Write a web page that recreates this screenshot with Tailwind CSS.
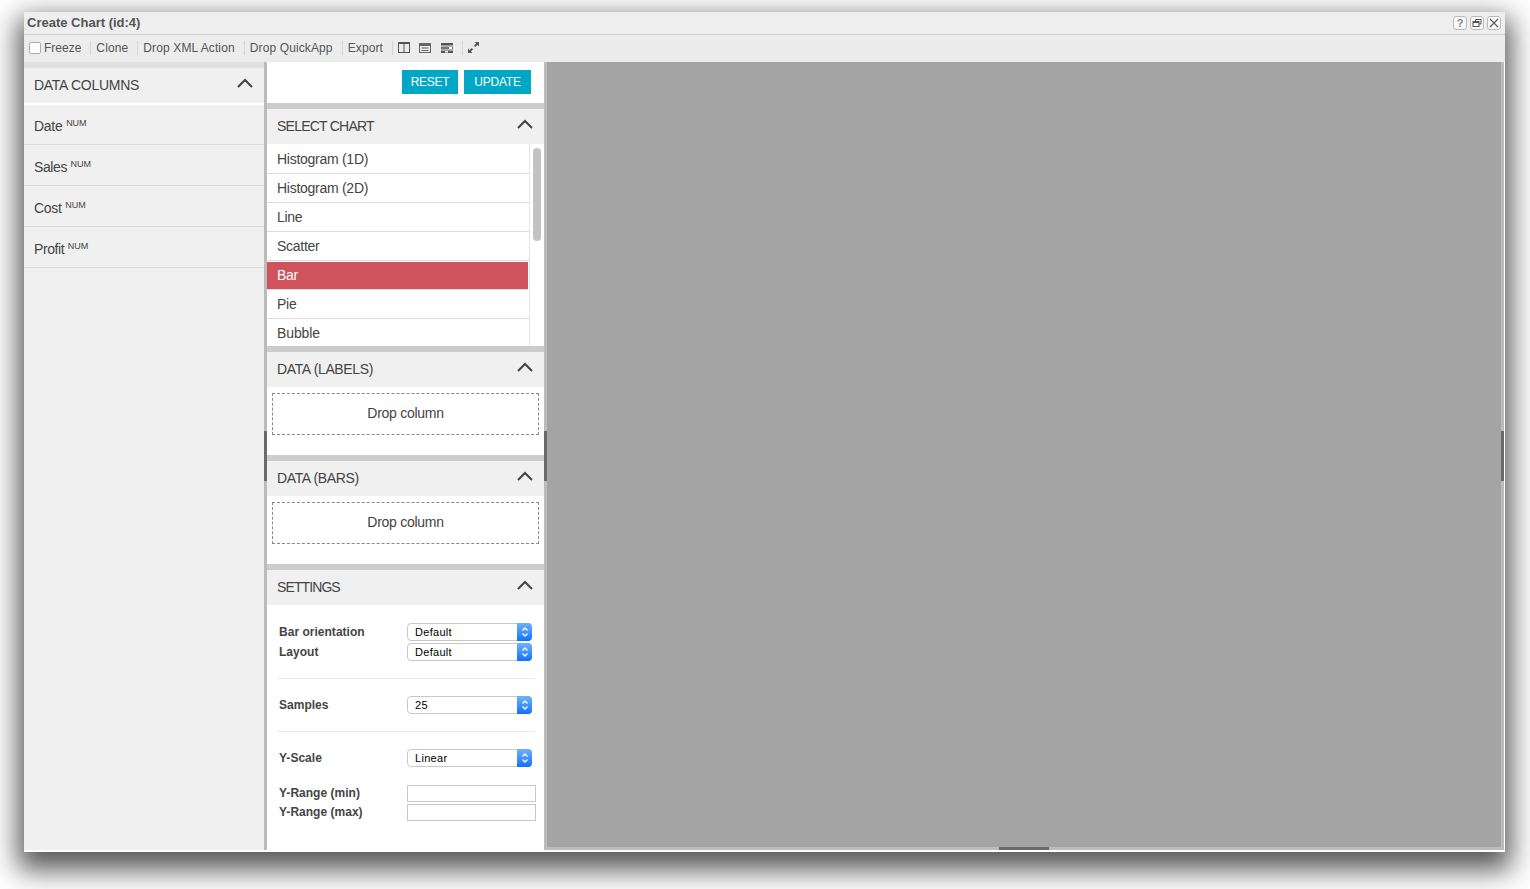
<!DOCTYPE html>
<html><head><meta charset="utf-8">
<script src="https://cdn.jsdelivr.net/npm/@tailwindcss/browser@4"></script>
</head>
<body class="bg-white overflow-hidden h-[889px] font-['Liberation_Sans',Arial,sans-serif] text-[#444]">
<div class="ml-[24px] mt-[12px] w-[1481px] h-[840px] flex flex-col bg-white shadow-[0_12px_26px_6px_rgba(0,0,0,0.66)]">
  <!-- title bar -->
  <div class="h-[23px] bg-[#eeeeee] border-b border-[#cfcfcf] flex items-center justify-between pl-[3px] pr-[4px] shrink-0">
    <span class="text-[13px] font-bold text-[#555]">Create Chart (id:4)</span>
    <div class="flex gap-[3px]">
      <div class="w-[14px] h-[14px] rounded-[3px] border border-[#bbb] bg-[#f8f8f8] flex items-center justify-center text-[11px] font-bold text-[#888] leading-none">?</div>
      <div class="w-[14px] h-[14px] rounded-[3px] border border-[#bbb] bg-[#f8f8f8] flex items-center justify-center">
        <svg width="10" height="10" viewBox="0 0 10 10" fill="none" stroke="#555" stroke-width="1"><path d="M3.5 3V1.5H9V6H7"/><rect x="1" y="3.5" width="6" height="5"/><path d="M1 4.5H7" /></svg>
      </div>
      <div class="w-[14px] h-[14px] rounded-[3px] border border-[#bbb] bg-[#f8f8f8] flex items-center justify-center">
        <svg width="10" height="10" viewBox="0 0 10 10" fill="none" stroke="#555" stroke-width="1.1"><path d="M1 1L9 9M9 1L1 9"/></svg>
      </div>
    </div>
  </div>
  <!-- toolbar -->
  <div class="h-[27px] bg-[#ececec] flex items-center pl-[5px] pb-[2px] text-[12px] text-[#555] tracking-[0.12px] shrink-0">
    <span class="w-[12px] h-[12px] rounded-[2px] border border-[#aaa] bg-white mr-[3px]"></span>
    <span class="tracking-[0px]">Freeze</span>
    <span class="w-px h-[14px] bg-[#d4d4d4] ml-[9px] mr-[5px]"></span>
    <span>Clone</span>
    <span class="w-px h-[14px] bg-[#d4d4d4] ml-[9px] mr-[5px]"></span>
    <span>Drop XML Action</span>
    <span class="w-px h-[14px] bg-[#d4d4d4] ml-[9px] mr-[5px]"></span>
    <span>Drop QuickApp</span>
    <span class="w-px h-[14px] bg-[#d4d4d4] ml-[9px] mr-[5px]"></span>
    <span>Export</span>
    <span class="w-px h-[14px] bg-[#d4d4d4] ml-[9px] mr-[5px]"></span>
    <svg width="12" height="11" viewBox="0 0 12 11" fill="none" stroke="#555" class="mr-[9px]"><rect x="0.5" y="0.5" width="11" height="10"/><path d="M6 0.5V10.5M0.5 1.5H11.5"/></svg>
    <svg width="12" height="10" viewBox="0 0 12 10" fill="none" stroke="#666" class="mr-[10px]"><rect x="0.5" y="0.5" width="11" height="9"/><path d="M0.5 2H11.5" stroke-width="2"/><path d="M2.5 5H9.5M2.5 7.5H9.5" /></svg>
    <svg width="12" height="10" viewBox="0 0 12 10" class="mr-[9px]"><rect width="12" height="2.5" fill="#555"/><rect y="3.5" width="12" height="3" fill="#777"/><rect x="8" y="4" width="3" height="2" fill="#fff"/><rect y="7.5" width="12" height="2.5" fill="#555"/><rect x="4" y="8" width="3" height="1.5" fill="#fff"/></svg>
    <span class="w-px h-[14px] bg-[#d4d4d4] mr-[5px]"></span>
    <svg width="11" height="11" viewBox="0 0 11 11" fill="#555"><path d="M6.5 0H11V4.5L9.4 2.9L7.2 5L6 3.8L8.1 1.6Z"/><path d="M4.5 11H0V6.5L1.6 8.1L3.8 6L5 7.2L2.9 9.4Z"/></svg>
  </div>
  <!-- body -->
  <div class="flex-1 min-h-0 flex bg-white">
    <!-- left -->
    <div class="w-[240px] shrink-0 bg-[#f0f0f0] flex flex-col tracking-[-0.27px]">
      <div class="h-[6px] bg-[#e0e0e0]"></div>
      <div class="h-[35px] flex items-center justify-between pl-[10px] pr-[11px] text-[14px] text-[#444]">
        <span>DATA COLUMNS</span>
        <svg width="16" height="10" viewBox="0 0 16 10" fill="none" stroke="#444" stroke-width="2" class="mb-[5px]"><path d="M1 9L8 2L15 9"/></svg>
      </div>
      <div class="h-[2px] bg-white"></div>
      <div class="h-[40px] pl-[10px] border-b border-[#dcdcdc] text-[14px] flex items-center pt-[3px]"><span>Date <sup class="text-[9px] -top-[5px] relative align-baseline tracking-[0px]">NUM</sup></span></div>
      <div class="h-[41px] pl-[10px] border-b border-[#dcdcdc] text-[14px] flex items-center pt-[5px]"><span class="tracking-[-0.4px]">Sales <sup class="text-[9px] -top-[5px] relative align-baseline tracking-[0px]">NUM</sup></span></div>
      <div class="h-[41px] pl-[10px] border-b border-[#dcdcdc] text-[14px] flex items-center pt-[5px]"><span>Cost <sup class="text-[9px] -top-[5px] relative align-baseline tracking-[0px]">NUM</sup></span></div>
      <div class="h-[41px] pl-[10px] border-b border-[#dcdcdc] text-[14px] flex items-center pt-[5px]"><span class="tracking-[-0.4px]">Profit <sup class="text-[9px] -top-[5px] relative align-baseline tracking-[0px]">NUM</sup></span></div>
    </div>
    <!-- splitter -->
    <div class="w-[3px] shrink-0 bg-[#bbbbbb] relative"><div class="absolute left-0 top-[369px] w-[3px] h-[50px] bg-[#6a6a6a]"></div></div>
    <!-- middle -->
    <div class="w-[277px] shrink-0 bg-white flex flex-col text-[14px] tracking-[-0.27px] overflow-hidden">
      <div class="h-[41px] shrink-0 flex justify-end gap-[6px] pr-[13px] pt-[8px]">
        <div class="w-[56px] h-[24px] bg-[#00a8c6] text-white text-[12px] tracking-[-0.3px] flex items-center justify-center">RESET</div>
        <div class="w-[67px] h-[24px] bg-[#00a8c6] text-white text-[12px] tracking-[-0.2px] flex items-center justify-center">UPDATE</div>
      </div>
      <div class="h-[6px] shrink-0 bg-[#cccccc]"></div>
      <div class="h-[35px] shrink-0 bg-[#f0f0f0] flex items-center justify-between pl-[10px] pr-[11px]">
        <span class="tracking-[-0.77px]">SELECT CHART</span>
        <svg width="16" height="10" viewBox="0 0 16 10" fill="none" stroke="#444" stroke-width="2" class="mb-[5px]"><path d="M1 9L8 2L15 9"/></svg>
      </div>
      <div class="h-[202px] shrink-0 flex overflow-hidden">
        <div class="w-[263px] border-r border-[#e4e4e4] shrink-0">
          <div class="h-[30px] pl-[10px] pt-[1px] flex items-center border-b border-[#dcdcdc]">Histogram (1D)</div>
          <div class="h-[29px] pl-[10px] flex items-center border-b border-[#dcdcdc]">Histogram (2D)</div>
          <div class="h-[29px] pl-[10px] flex items-center border-b border-[#dcdcdc]">Line</div>
          <div class="h-[29px] pl-[10px] flex items-center border-b border-[#dcdcdc]">Scatter</div>
          <div class="h-[29px] w-[261px] pl-[10px] flex items-center bg-[#cf535d] bg-clip-padding text-white border-t border-b border-t-white border-b-[#dcdcdc]">Bar</div>
          <div class="h-[29px] pl-[10px] flex items-center border-b border-[#dcdcdc]">Pie</div>
          <div class="h-[29px] pl-[10px] flex items-center tracking-[-0.1px]">Bubble</div>
        </div>
        <div class="flex-1 pt-[4px] pl-[3px]"><div class="w-[8px] h-[93px] rounded-[4px] bg-[#c2c2c2]"></div></div>
      </div>
      <div class="h-[6px] shrink-0 bg-[#cccccc]"></div>
      <div class="h-[35px] shrink-0 bg-[#f0f0f0] flex items-center justify-between pl-[10px] pr-[11px]">
        <span class="tracking-[-0.35px]">DATA (LABELS)</span>
        <svg width="16" height="10" viewBox="0 0 16 10" fill="none" stroke="#444" stroke-width="2" class="mb-[5px]"><path d="M1 9L8 2L15 9"/></svg>
      </div>
      <div class="h-[68px] shrink-0 pt-[6px] px-[5px]">
        <div class="h-[42px] pb-[2px] border border-dashed border-[#888] flex items-center justify-center">Drop column</div>
      </div>
      <div class="h-[6px] shrink-0 bg-[#cccccc]"></div>
      <div class="h-[35px] shrink-0 bg-[#f0f0f0] flex items-center justify-between pl-[10px] pr-[11px]">
        <span class="tracking-[-0.37px]">DATA (BARS)</span>
        <svg width="16" height="10" viewBox="0 0 16 10" fill="none" stroke="#444" stroke-width="2" class="mb-[5px]"><path d="M1 9L8 2L15 9"/></svg>
      </div>
      <div class="h-[68px] shrink-0 pt-[6px] px-[5px]">
        <div class="h-[42px] pb-[2px] border border-dashed border-[#888] flex items-center justify-center">Drop column</div>
      </div>
      <div class="h-[6px] shrink-0 bg-[#cccccc]"></div>
      <div class="h-[35px] shrink-0 bg-[#f0f0f0] flex items-center justify-between pl-[10px] pr-[11px]">
        <span class="tracking-[-0.9px]">SETTINGS</span>
        <svg width="16" height="10" viewBox="0 0 16 10" fill="none" stroke="#444" stroke-width="2" class="mb-[5px]"><path d="M1 9L8 2L15 9"/></svg>
      </div>
      <!-- settings -->
      <div class="pl-[12px] pr-[8px] pt-[18px] text-[12px] font-bold text-[#444] tracking-[0.02px]">
        <div class="flex items-center h-[18px] mb-[2px]"><span class="w-[128px]">Bar orientation</span>
          <div class="w-[125px] h-[18px] rounded-[4px] border border-[#c8c8c8] bg-white flex items-center justify-between font-normal text-[11px] tracking-[0.3px] text-black pl-[7px]">Default<div class="w-[15px] h-[18px] -mr-px rounded-r-[4px] bg-gradient-to-b from-[#6cb3fa] to-[#0d6ffb] flex items-center justify-center"><svg width="8" height="12" viewBox="0 0 8 12" fill="none" stroke="#fff" stroke-width="1.3"><path d="M1.5 4.5L4 2L6.5 4.5M1.5 7.5L4 10L6.5 7.5"/></svg></div></div></div>
        <div class="flex items-center h-[18px]"><span class="w-[128px]">Layout</span>
          <div class="w-[125px] h-[18px] rounded-[4px] border border-[#c8c8c8] bg-white flex items-center justify-between font-normal text-[11px] tracking-[0.3px] text-black pl-[7px]">Default<div class="w-[15px] h-[18px] -mr-px rounded-r-[4px] bg-gradient-to-b from-[#6cb3fa] to-[#0d6ffb] flex items-center justify-center"><svg width="8" height="12" viewBox="0 0 8 12" fill="none" stroke="#fff" stroke-width="1.3"><path d="M1.5 4.5L4 2L6.5 4.5M1.5 7.5L4 10L6.5 7.5"/></svg></div></div></div>
        <div class="h-px bg-[#eaeaea] mt-[17px] -ml-[2px] mr-[1px] mb-[17px]"></div>
        <div class="flex items-center h-[18px]"><span class="w-[128px]">Samples</span>
          <div class="w-[125px] h-[18px] rounded-[4px] border border-[#c8c8c8] bg-white flex items-center justify-between font-normal text-[11px] tracking-[0.3px] text-black pl-[7px]">25<div class="w-[15px] h-[18px] -mr-px rounded-r-[4px] bg-gradient-to-b from-[#6cb3fa] to-[#0d6ffb] flex items-center justify-center"><svg width="8" height="12" viewBox="0 0 8 12" fill="none" stroke="#fff" stroke-width="1.3"><path d="M1.5 4.5L4 2L6.5 4.5M1.5 7.5L4 10L6.5 7.5"/></svg></div></div></div>
        <div class="h-px bg-[#eaeaea] mt-[17px] -ml-[2px] mr-[1px] mb-[17px]"></div>
        <div class="flex items-center h-[18px]"><span class="w-[128px]">Y-Scale</span>
          <div class="w-[125px] h-[18px] rounded-[4px] border border-[#c8c8c8] bg-white flex items-center justify-between font-normal text-[11px] tracking-[0.3px] text-black pl-[7px]">Linear<div class="w-[15px] h-[18px] -mr-px rounded-r-[4px] bg-gradient-to-b from-[#6cb3fa] to-[#0d6ffb] flex items-center justify-center"><svg width="8" height="12" viewBox="0 0 8 12" fill="none" stroke="#fff" stroke-width="1.3"><path d="M1.5 4.5L4 2L6.5 4.5M1.5 7.5L4 10L6.5 7.5"/></svg></div></div></div>
        <div class="flex items-center h-[17px] mt-[18px]"><span class="w-[128px] -translate-y-px">Y-Range (min)</span><div class="w-[129px] h-[17px] border border-[#c8c8c8] bg-white"></div></div>
        <div class="flex items-center h-[17px] mt-[2px]"><span class="w-[128px] -translate-y-px">Y-Range (max)</span><div class="w-[129px] h-[17px] border border-[#c8c8c8] bg-white"></div></div>
      </div>
    </div>
    <!-- splitter -->
    <div class="w-[3px] shrink-0 bg-[#bbbbbb] relative"><div class="absolute left-0 top-[369px] w-[3px] h-[50px] bg-[#6a6a6a]"></div></div>
    <!-- right -->
    <div class="flex-1 min-w-0 flex flex-col">
      <div class="flex-1 min-h-0 flex">
        <div class="flex-1 bg-[#a4a4a4]"></div>
        <div class="w-[3px] shrink-0 bg-[#bbbbbb] relative"><div class="absolute left-0 top-[369px] w-[3px] h-[50px] bg-[#6a6a6a]"></div></div>
      </div>
      <div class="h-[3px] shrink-0 bg-[#bbbbbb] relative"><div class="absolute left-[452px] top-0 w-[50px] h-[3px] bg-[#6a6a6a]"></div></div>
    </div>
    <div class="w-px shrink-0 bg-white"></div>
  </div>
  <div class="h-[2px] shrink-0 bg-white"></div>
</div>
</body></html>
